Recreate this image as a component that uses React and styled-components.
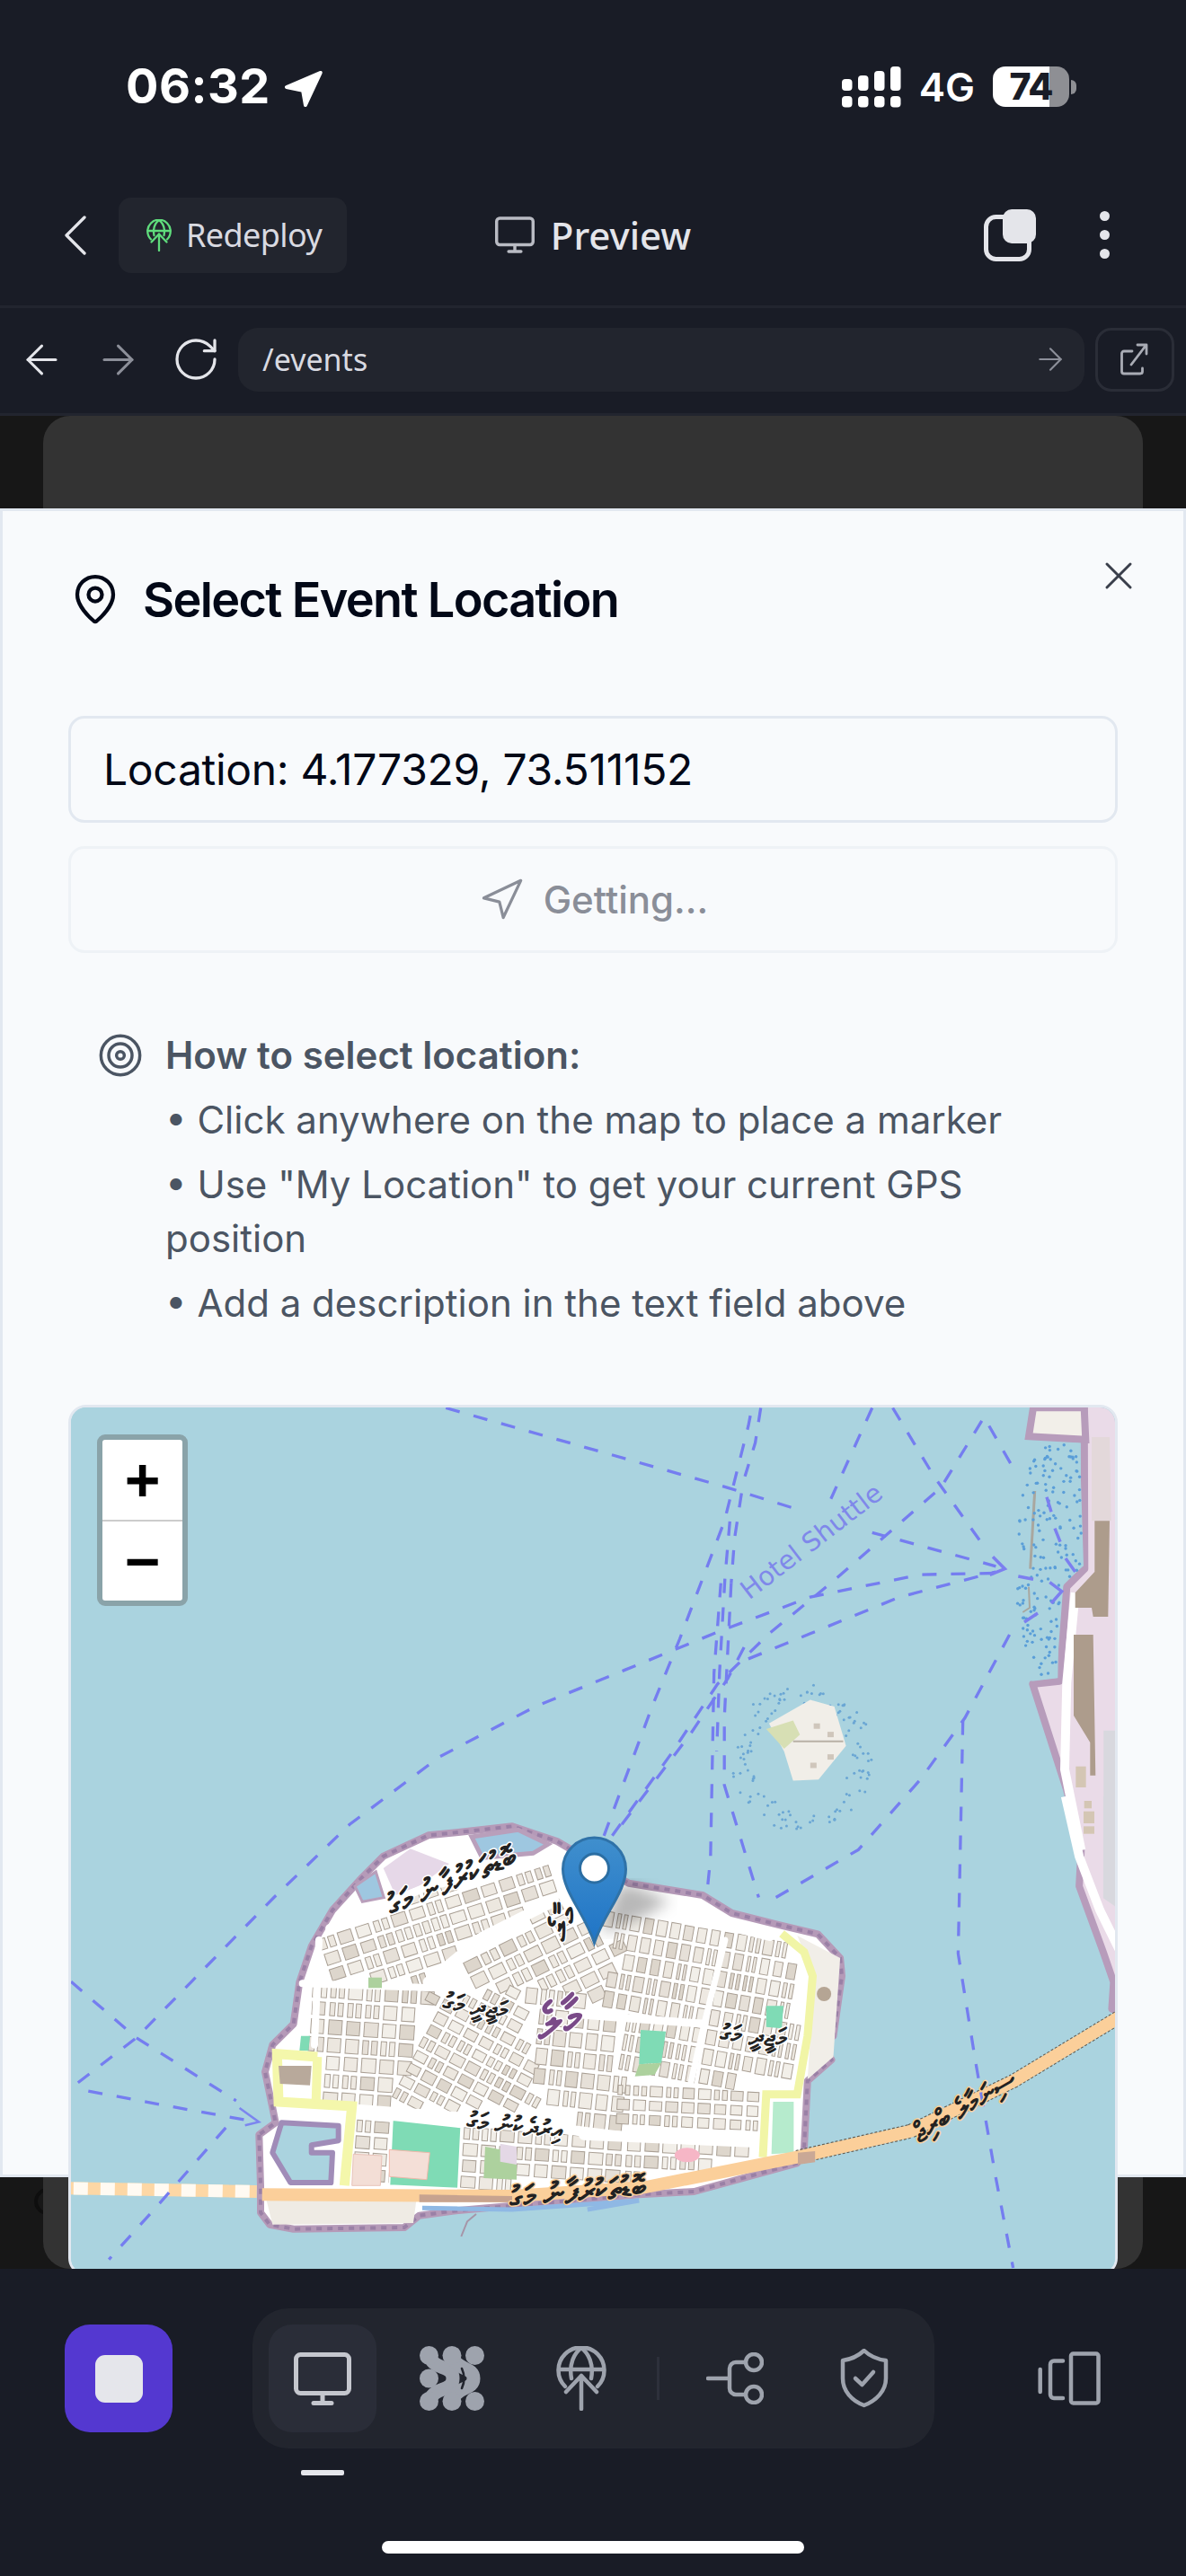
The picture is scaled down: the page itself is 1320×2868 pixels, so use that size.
import React from 'react';
import styled, { createGlobalStyle } from 'styled-components';
import { ChevronLeft, ArrowLeft, ArrowRight, RotateCw, MapPin, X, Navigation, Target } from 'lucide-react';

const GlobalStyle = createGlobalStyle`
    html, body {
        margin:0;
        padding:0;
        background:#191c26;
    }
    * {
        box-sizing:border-box;
    }
`

const Screen = styled.div`
    width:1320px;
    height:2868px;
    display:flex;
    flex-direction:column;
    overflow:hidden;
    background:#191c26;
    font-family:Inter, "Liberation Sans", sans-serif;
`

/* status bar */
const StatusBar = styled.div`
    height:200px;
    flex:none;
    display:flex;
    justify-content:space-between;
    padding:74px 130px 0 140px;
    color:#fff;
`

const Clock = styled.div`
    display:flex;
    align-items:flex-start;
    gap:14px;
    font-size:54px;
    font-weight:700;
    line-height:44px;
    letter-spacing:0.5px;
    svg { margin-top:3px; }
`

const Cell = styled.div`
    display:flex;
    align-items:flex-start;
    gap:20px;
`

const Network = styled.div`
    font-size:44px;
    font-weight:600;
    line-height:46px;
`

const Battery = styled.div`
    position:relative;
    width:85px;
    height:45px;
    border-radius:14px;
    background:linear-gradient(to right, #fff 74%, #8e8f94 74%);
    color:#191c26;
    font-size:41px;
    font-weight:800;
    line-height:45px;
    letter-spacing:-1px;
    text-align:center;

    &:after {
        content:"";
        position:absolute;
        top:15px;
        right:-8px;
        width:6px;
        height:16px;
        border-radius:0 6px 6px 0;
        background:#8e8f94;
    }
`

/* nav bar */
const NavBar = styled.div`
    height:143px;
    flex:none;
    display:grid;
    grid-template-columns:1fr auto 1fr;
    align-items:center;
    padding-bottom:17px;
    border-bottom:3px solid #22252f;
`

const NavLeft = styled.div`
    display:flex;
    align-items:center;
    gap:8px;
    padding-left:44px;
    color:#e4e5ea;
`

const Chip = styled.div`
    width:254px;
    height:84px;
    border-radius:14px;
    background:#22252e;
    display:flex;
    align-items:center;
    gap:16px;
    padding-left:31px;
    color:#d9dae1;
    font-family:"Noto Sans", Inter, sans-serif;
    font-size:36px;
    letter-spacing:-0.6px;
`

const Title = styled.div`
    display:flex;
    align-items:center;
    gap:18px;
    color:#e4e5ea;
    font-family:"Noto Sans", Inter, sans-serif;
    font-size:42px;
    font-weight:500;
`

const TitleIcon = styled.span`
    display:flex;
    color:#b9bbc3;
`

const NavRight = styled.div`
    display:flex;
    align-items:center;
    justify-content:flex-end;
    gap:71px;
    padding-right:85px;
`

const Dots = styled.div`
    display:flex;
    flex-direction:column;
    gap:10px;

    i {
        width:11px;
        height:11px;
        border-radius:50%;
        background:#e4e5ea;
    }
`

/* url bar */
const UrlBar = styled.div`
    height:120px;
    flex:none;
    display:flex;
    align-items:center;
    padding:0 13px 3px 20px;
    border-bottom:3px solid #22252f;
`

const BrowserIcon = styled.span`
    display:flex;
    margin-right:${p => p.$gap}px;
    color:${p => p.$dim ? '#8c8f99' : '#e4e5ea'};
`

const UrlField = styled.div`
    flex:1;
    height:71px;
    border-radius:22px;
    background:#22252e;
    display:flex;
    align-items:center;
    justify-content:space-between;
    padding:0 18px 0 27px;
    color:#d9dae1;
    font-family:"Noto Sans", Inter, sans-serif;
    font-size:34px;
`

const OpenButton = styled.div`
    width:88px;
    height:71px;
    margin-left:12px;
    border:3px solid #2a2d37;
    border-radius:18px;
    display:flex;
    align-items:center;
    justify-content:center;
`

/* page behind the dialog */
const Stage = styled.div`
    position:relative;
    flex:1;
    min-height:0;
    overflow:hidden;
    background:#171717;
    padding:0 48px;
    display:flex;
`

const BackCard = styled.div`
    position:relative;
    flex:1;
    border-radius:30px;
    background:#333333;
`

const GhostRing = styled.div`
    position:absolute;
    left:38px;
    bottom:60px;
    width:30px;
    height:30px;
    border:4px solid #0e0e0e;
    border-radius:50%;
`

const Dialog = styled.div`
    position:absolute;
    top:103px;
    left:0;
    right:0;
    height:1858px;
    padding:66px 73px 0;
    background:#f8fafc;
    border:3px solid #e2e8f0;
    color:#020817;
`

const CloseButton = styled.div`
    position:absolute;
    top:46px;
    right:46px;
    display:flex;
    color:#3a3f4b;
`

const DialogHeading = styled.div`
    display:flex;
    align-items:center;
    gap:23px;
    height:64px;
    font-size:54px;
    font-weight:600;
    letter-spacing:-1.65px;
    margin-bottom:98px;
`

const LocationInput = styled.div`
    height:119px;
    border:3px solid #e2e8f0;
    border-radius:18px;
    padding:0 36px;
    display:flex;
    align-items:center;
    font-size:48px;
    letter-spacing:-0.3px;
    margin-bottom:26px;
`

const GpsButton = styled.button`
    width:100%;
    height:119px;
    border:3px solid #eef2f6;
    border-radius:18px;
    background:transparent;
    display:flex;
    align-items:center;
    justify-content:center;
    gap:21px;
    color:#8a8e98;
    font-family:inherit;
    font-size:42px;
    font-weight:500;
    margin-bottom:84px;
`

const Hint = styled.div`
    padding:0 37px;
    color:#4b5563;
    font-size:42px;
    line-height:60px;
    margin-bottom:83px;
`

const HintTitle = styled.div`
    display:flex;
    align-items:center;
    gap:24px;
    font-weight:600;
    margin-left:-5px;
`

const HintList = styled.ul`
    list-style:none;
    margin:0;
    padding:0 0 0 71px;

    li { margin-top:12px; }
`

const MapFrame = styled.div`
    position:relative;
    height:970px;
    border:3px solid #e2e8f0;
    border-radius:20px;
    overflow:hidden;
    background:#aad3df;

    svg { display:block; }
`

const ZoomControl = styled.div`
    position:absolute;
    top:30px;
    left:29px;
    width:101px;
    height:191px;
    border:6px solid #8aa3a9;
    border-radius:9px;
    background:#fff;
    display:flex;
    flex-direction:column;
`

const ZoomButton = styled.div`
    flex:1;
    display:flex;
    align-items:center;
    justify-content:center;
    color:#000;
    font-family:"Liberation Sans", sans-serif;
    font-size:68px;
    font-weight:700;
    line-height:1;
    & + & { border-top:2px solid #ccc; }
`

/* bottom bar */
const BottomBar = styled.div`
    height:342px;
    flex:none;
    display:flex;
    flex-direction:column;
    padding-top:44px;
`

const DockRow = styled.div`
    display:flex;
    align-items:center;
    padding-left:72px;
`

const StopButton = styled.div`
    width:120px;
    height:120px;
    border-radius:28px;
    background:#5438d0;
    display:flex;
    align-items:center;
    justify-content:center;
    margin-right:89px;

    i {
        width:53px;
        height:53px;
        border-radius:11px;
        background:#e5e6eb;
    }
`

const Dock = styled.div`
    height:156px;
    padding:18px;
    border-radius:40px;
    background:#22252e;
    display:flex;
    gap:24px;
`

const DockTab = styled.div`
    width:120px;
    height:120px;
    border-radius:26px;
    background:${p => p.$active ? '#2a2d38' : 'transparent'};
    color:${p => p.$active ? '#c5c7ce' : '#9ea3ad'};
    display:flex;
    align-items:center;
    justify-content:center;
`

const DockDivider = styled.div`
    width:3px;
    height:48px;
    margin-top:36px;
    background:#2d303b;
`

const DockSide = styled.div`
    margin-left:115px;
    display:flex;
    color:#9ea3ad;
`

const TabMark = styled.div`
    width:48px;
    height:6px;
    margin:24px 0 0 335px;
    border-radius:2px;
    background:#e5e6eb;
`

const HomeBar = styled.div`
    width:470px;
    height:14px;
    margin:73px auto 0;
    border-radius:7px;
    background:#fff;
`

/* drawn icons */
const MonitorIcon = ({ w = 64, h = 59, sw = 5 }) => (
    <svg width={w} height={h} viewBox="0 0 64 59" fill="none" stroke="currentColor" strokeWidth={sw} strokeLinecap="round" strokeLinejoin="round">
        <rect x="2.5" y="2.5" width="59" height="43" rx="5" />
        <path d="M32 46v10M22 56.500h20" />
    </svg>
)

const GlobeUp = ({ w = 56, h = 72, color = 'currentColor', sw = 4.500 }) => (
    <svg width={w} height={h} viewBox="0 0 56 72" fill="none" stroke={color} strokeWidth={sw} strokeLinecap="round" strokeLinejoin="round">
        <path d="M10 45A25.500 25.500 0 1 1 46 45" />
        <path d="M3 26h50" />
        <path d="M17 36C14 20 20 8 28 2c8 6 14 18 11 34" />
        <path d="M28 70V33M11 51l17-18 17 18" />
    </svg>
)

const NetworkIcon = () => (
    <svg width="72" height="72" viewBox="0 0 72 72" fill="#9ea3ad">
        <g fill="none" stroke="#9ea3ad" strokeWidth="15" strokeLinecap="round">
            <path d="M12 13C17 27 37 21 37 36S17 45 12 59" />
            <path d="M37 13C42 27 60 23 60 36S42 45 37 59" />
        </g>
        {[[10.5, 10.5], [36, 10.5], [61.5, 10.5], [10.5, 36], [10.5, 61.5], [36, 61.5], [61.5, 61.5]].map(([x, y]) => (
            <circle key={`${x}-${y}`} cx={x} cy={y} r="10.500" />
        ))}
        <path d="M47 25q5 11 0 22" fill="none" stroke="#22252e" strokeWidth="2.600" strokeLinecap="round" />
    </svg>
)

const BranchIcon = () => (
    <svg width="64" height="58" viewBox="26 49 64 58" fill="none" stroke="currentColor" strokeWidth="4.500" strokeLinecap="round">
        <path d="M28 78h24M69 60H59a7 7 0 0 0-7 7v22a7 7 0 0 0 7 7h10" />
        <circle cx="79" cy="60" r="9" />
        <circle cx="79" cy="96" r="9" />
    </svg>
)

const ShieldIcon = () => (
    <svg width="54" height="66" viewBox="175 45 54 66" fill="none" stroke="currentColor" strokeWidth="4.500" strokeLinecap="round" strokeLinejoin="round">
        <path d="M201.700 47C193 55 186 57 178 58v20c0 14 10 25 23.700 30 13.300-5 24.300-16 24.300-30V58c-8-1-16-3-24.300-11z" />
        <path d="M192 78l7.500 7 12.500-14" />
    </svg>
)

const RotateIcon = () => (
    <svg width="70" height="60" viewBox="394 48 70 60" fill="none" stroke="currentColor" strokeWidth="4.500" strokeLinecap="round" strokeLinejoin="round">
        <rect x="431" y="50.500" width="30.500" height="55" rx="2.500" />
        <path d="M422 58.500h-10a4 4 0 0 0-4 4V96a4 4 0 0 0 4 4h10M396.700 68v25" />
    </svg>
)

const CopyIcon = () => (
    <svg width="58" height="58" viewBox="1095 233 58 58">
        <rect x="1097.500" y="241.500" width="48" height="47" rx="11" fill="none" stroke="#e4e5ea" strokeWidth="5" />
        <rect x="1116" y="233" width="37" height="38" rx="10" fill="#e4e5ea" />
    </svg>
)

const OpenIcon = () => (
    <svg width="32" height="36" viewBox="0 0 32 36" fill="none" stroke="#a9acb5" strokeWidth="2.800" strokeLinecap="round" strokeLinejoin="round">
        <path d="M13 9H4a2.500 2.500 0 0 0-2.500 2.500v20A2.500 2.500 0 0 0 4 34h18a2.500 2.500 0 0 0 2.500-2.500V28" />
        <path d="M12 24L28 3M19 2h10v10" />
    </svg>
)

const SignalIcon = () => (
    <svg width="66" height="46" viewBox="0 0 66 46" fill="#fff">
        {[[0, 14], [18, 10], [36, 5], [54, 0]].map(([x, y]) => (
            <g key={x}>
                <rect x={x} y={y} width="11.500" height={27 - y} rx="4" />
                <rect x={x} y="33" width="11.500" height="12.500" rx="4" />
            </g>
        ))}
    </svg>
)

/* map drawing: points are read off the reference in page pixels */
const zoom3 = ([x, y]) => [60 + x / 1.3067, 1550 + y / 1.6];
const zoom8 = ([x, y]) => [270 + x / 3, 2000 + y / 3];
const zoom9 = ([x, y]) => [650 + x / 2.613, 2000 + y / 3];
const zoom10 = ([x, y]) => [1100 + x / 3, 1560 + y / 3];
const fmt = pts => pts.map(([x, y]) => `${x.toFixed(1)},${y.toFixed(1)}`).join(' ');
const on = (fn, list) => list.map(fn);

let seed = 7;
const rnd = () => {
    seed = (seed * 16807) % 2147483647;
    return seed / 2147483647;
};

const inside = (poly, x, y) => {
    let hit = false;
    for (let i = 0, j = poly.length - 1; i < poly.length; j = i++) {
        const [xi, yi] = poly[i];
        const [xj, yj] = poly[j];
        if ((yi > y) !== (yj > y) && x < ((xj - xi) * (y - yi)) / (yj - yi) + xi) hit = !hit;
    }
    return hit;
};

const coast = [
    ...on(zoom8, [[55, 1130], [60, 1300], [60, 1390], [90, 1430], [170, 1445], [540, 1440], [590, 1400], [700, 1385]]),
    ...on(zoom9, [[160, 1330], [320, 1320], [620, 1225], [640, 1180], [650, 950], [720, 880], [680, 800], [725, 800], [750, 600], [745, 540], [680, 460], [570, 430], [430, 390], [345, 330], [130, 290]]),
    ...on(zoom8, [[1050, 150], [900, 100], [720, 120], [620, 130], [470, 200], [400, 270], [300, 380], [230, 500], [190, 620], [170, 760], [100, 830], [75, 920], [100, 1040], [110, 1090]]),
];

const cityAreas = [
    { poly: on(zoom8, [[280, 470], [620, 310], [1040, 225], [1040, 340], [800, 460], [620, 620], [280, 620]]), angle: -18, w: 21, h: 18 },
    { poly: on(zoom8, [[680, 620], [1040, 350], [1260, 500], [1200, 700], [950, 640]]), angle: -26, w: 22, h: 18 },
    { poly: on(zoom8, [[210, 640], [640, 650], [500, 1040], [270, 1040], [240, 840]]), angle: 4, w: 20, h: 20 },
    { poly: on(zoom8, [[500, 690], [920, 640], [1000, 1040], [480, 1040]]), angle: 28, w: 19, h: 16 },
    { poly: on(zoom8, [[950, 650], [1260, 700], [1260, 1110], [1000, 1060]]), angle: 6, w: 18, h: 22 },
    { poly: on(zoom8, [[380, 1070], [780, 1090], [1260, 1150], [1260, 1300], [380, 1300]]), angle: 4, w: 20, h: 18 },
    { poly: on(zoom9, [[100, 350], [560, 480], [625, 600], [610, 970], [0, 910], [0, 520]]), angle: 10, w: 15, h: 22 },
    { poly: on(zoom9, [[0, 940], [510, 1000], [505, 1135], [0, 1100]]), angle: 3, w: 18, h: 16 },
    { poly: on(zoom9, [[0, 1150], [495, 1170], [495, 1205], [180, 1270], [0, 1300]]), angle: 3, w: 20, h: 18 },
];

const blockFills = ['#f0ece5', '#ece7df', '#e6e0d8', '#f2efe9', '#ddd6cc', '#eee9e2'];

const cityBlocks = cityAreas.flatMap(({ poly, angle, w, h }, areaIndex) => {
    const xs = poly.map(p => p[0]);
    const ys = poly.map(p => p[1]);
    const cx = (Math.min(...xs) + Math.max(...xs)) / 2;
    const cy = (Math.min(...ys) + Math.max(...ys)) / 2;
    const a = (angle * Math.PI) / 180;
    const out = [];
    for (let i = -16; i <= 16; i++) {
        for (let j = -16; j <= 16; j++) {
            const u = i * w;
            const v = j * h;
            const x = cx + u * Math.cos(a) - v * Math.sin(a);
            const y = cy + u * Math.sin(a) + v * Math.cos(a);
            if (!inside(poly, x, y)) continue;
            if (cityAreas.slice(0, areaIndex).some(area => inside(area.poly, x, y))) continue;
            const bw = w - 4 - rnd() * 2;
            const bh = h - 4 - rnd() * 2;
            const fill = blockFills[Math.floor(rnd() * blockFills.length)];
            if (rnd() < 0.3) {
                // a narrow pair of buildings instead of one block
                const dx = (bw / 4 + 1) * Math.cos(a);
                const dy = (bw / 4 + 1) * Math.sin(a);
                out.push({ x: x - dx, y: y - dy, angle, w: bw / 2 - 1.5, h: bh, fill });
                out.push({ x: x + dx, y: y + dy, angle, w: bw / 2 - 1.5, h: bh, fill });
            } else {
                out.push({ x, y, angle, w: bw, h: bh, fill });
            }
        }
    }
    return out;
});

const lagoon = on(zoom10, [[175, 135], [305, 140], [318, 550], [238, 620], [232, 925], [145, 935], [90, 640], [100, 420], [120, 260]]);
const lagoonDots = [];
while (lagoonDots.length < 170) {
    const x = 1125 + rnd() * 90;
    const y = 1600 + rnd() * 290;
    if (inside(lagoon, x, y)) lagoonDots.push([x, y]);
}

const reefDots = [];
while (reefDots.length < 130) {
    const t = rnd() * Math.PI * 2;
    const r = 0.72 + rnd() * 0.34;
    reefDots.push(zoom3([1088 + Math.cos(t) * 98 * r, 650 + Math.sin(t) * 125 * r]));
}

const ferryLines = [
    on(zoom3, [[570, 28], [980, 170], [1085, 210]]),
    on(zoom3, [[800, 790], [870, 560], [910, 440], [975, 230], [1010, 60], [1015, 28]]),
    on(zoom3, [[812, 790], [900, 640], [965, 520], [1040, 430], [1130, 340], [1290, 170], [1360, 30]]),
    on(zoom3, [[826, 770], [925, 610], [980, 510], [1010, 440]]),
    on(zoom3, [[970, 340], [960, 500], [955, 830], [950, 890]]),
    on(zoom3, [[983, 230], [976, 330], [968, 500], [964, 640]]),
    on(zoom3, [[985, 340], [975, 580], [975, 700], [1025, 900]]),
    on(zoom3, [[1000, 180], [990, 260], [985, 340]]),
    on(zoom3, [[1028, 28], [1020, 90], [1005, 150]]),
    on(zoom3, [[35, 1230], [120, 1150], [200, 1050], [320, 900], [430, 770], [560, 650], [700, 560], [830, 495], [970, 425], [1100, 365], [1260, 325], [1380, 322]]),
    on(zoom3, [[1010, 475], [1100, 430], [1230, 365], [1370, 320]]),
    on(zoom3, [[1050, 900], [1170, 815], [1260, 690], [1325, 580], [1395, 420]]),
    on(zoom3, [[1322, 585], [1315, 1000], [1340, 1190], [1370, 1400], [1395, 1560]]),
    on(zoom3, [[25, 1050], [120, 1150], [265, 1262]]),
    on(zoom3, [[50, 1245], [160, 1270], [295, 1300]]),
    on(zoom3, [[250, 1310], [150, 1450], [80, 1545]]),
    on(zoom3, [[1220, 28], [1280, 150], [1350, 270]]),
    on(zoom3, [[1190, 28], [1130, 190]]),
    on(zoom3, [[1190, 250], [1370, 310]]),
    on(zoom3, [[1360, 60], [1395, 135]]),
];

const whiteRoads = [
    [9, on(zoom8, [[290, 440], [620, 300], [1030, 212]])],
    [8, on(zoom8, [[255, 480], [240, 830]])],
    [8, on(zoom8, [[200, 625], [640, 640]])],
    [12, on(zoom8, [[620, 620], [800, 470], [1040, 350]])],
    [11, on(zoom8, [[380, 1045], [780, 1075], [1260, 1135]])],
    [12, on(zoom9, [[0, 1130], [500, 1155]])],
    [12, on(zoom9, [[100, 340], [540, 465]])],
    [9, on(zoom9, [[0, 730], [350, 760]])],
    [7, on(zoom9, [[410, 480], [350, 760], [310, 960]])],
];

const Label = ({ x, y, angle, size = 28, color = '#222', halo = '#fff', children }) => (
    <text
        x={x}
        y={y}
        transform={`rotate(${angle} ${x} ${y})`}
        textAnchor="middle"
        fontFamily="'Noto Sans', 'DejaVu Sans', sans-serif"
        fontSize={size}
        fontWeight="700"
        fill={color}
        stroke={halo}
        strokeWidth="3"
        paintOrder="stroke"
    >
        {children}
    </text>
);

const MapPicture = () => (
    <svg width="1162" height="964" viewBox="79 1567 1162 964">
        <defs>
            <filter id="soft"><feGaussianBlur stdDeviation="0.7" /></filter>
            <filter id="softer"><feGaussianBlur stdDeviation="0.4" /></filter>
            <filter id="shade"><feGaussianBlur stdDeviation="8" /></filter>
            <linearGradient id="pinFill" x1="0" y1="0" x2="0" y2="1">
                <stop offset="0" stopColor="#408fcd" />
                <stop offset="1" stopColor="#1f74c6" />
            </linearGradient>
        </defs>
        <rect x="79" y="1567" width="1162" height="964" fill="#aad3df" />

        <g filter="url(#soft)">
            {/* airport island */}
            <polygon
                points={fmt([...on(zoom10, [[320, 0], [322, 560], [262, 620], [238, 935], [148, 945], [262, 1300], [310, 1500]]), ...on(zoom9, [[1440, 300], [1510, 520], [1540, 620], [1535, 710], [1560, 720], [1560, 0]]), [1245, 1560]])}
                fill="#eadbe8"
                stroke="#b79cbb"
                strokeWidth="8"
                strokeLinejoin="round"
            />
            <polygon points={fmt(on(zoom10, [[150, 22], [320, 22], [325, 128], [135, 118]]))} fill="#f2efe9" stroke="#b79cbb" strokeWidth="8" />
            <polygon points={fmt(lagoon.slice(0, 6))} fill="#aad3df" />
            <polyline points={fmt(on(zoom10, [[290, 640], [262, 940], [255, 1230], [310, 1500]]))} fill="none" stroke="#fff" strokeWidth="10" />
            <polyline points={fmt(on(zoom9, [[1400, 0], [1440, 200], [1500, 380], [1560, 520]]))} fill="none" stroke="#fff" strokeWidth="10" />
            <polygon points={fmt(on(zoom10, [[345, 120], [405, 120], [410, 400], [345, 400]]))} fill="#e3d8da" />
            <polygon points={fmt(on(zoom10, [[355, 400], [405, 400], [400, 720], [350, 720], [345, 690], [290, 690], [290, 640], [355, 570]]))} fill="#ad9c8c" />
            <polygon points={fmt(on(zoom10, [[285, 780], [350, 780], [358, 1250], [340, 1250], [340, 1140], [285, 1050]]))} fill="#ad9c8c" />
            <polygon points={fmt(on(zoom10, [[385, 1100], [430, 1100], [430, 1500], [385, 1500]]))} fill="#d8d8de" />
            <polygon points={fmt(on(zoom9, [[1510, 0], [1560, 0], [1560, 380], [1510, 340]]))} fill="#d8d8de" />
            {[[292, 1220, 34, 70], [318, 1370, 36, 40], [318, 1420, 36, 25], [320, 1335, 25, 25]].map(([x, y, w, h]) => {
                const [px, py] = zoom10([x, y]);
                return <rect key={y} x={px} y={py} width={w / 3} height={h / 3} fill="#d4c6b4" />;
            })}
            <polyline points={fmt(on(zoom10, [[155, 300], [140, 560]]))} fill="none" stroke="#a9a79f" strokeWidth="3" />
            <polyline points={fmt(on(zoom10, [[135, 620], [138, 690], [115, 705]]))} fill="none" stroke="#a9a79f" strokeWidth="2" />
            {lagoonDots.map(([x, y], i) => <circle key={i} cx={x} cy={y} r="1.700" fill="#5a9ed8" />)}

            {/* small island */}
            {reefDots.map(([x, y], i) => <circle key={i} cx={x} cy={y} r="1.500" fill="#6aa6d4" />)}
            <polygon points={fmt(on(zoom3, [[1040, 590], [1100, 548], [1135, 560], [1152, 630], [1112, 690], [1075, 692], [1062, 640]]))} fill="#f1eee8" />
            <polygon points={fmt(on(zoom3, [[1036, 600], [1075, 585], [1085, 610], [1062, 635]]))} fill="#d7dfb4" />
            <polyline points={fmt(on(zoom3, [[1075, 622], [1148, 622]]))} stroke="#b8b0a6" strokeWidth="2" fill="none" />
            {[[1105, 590], [1125, 605], [1100, 660], [1125, 645]].map(([x, y]) => {
                const [px, py] = zoom3([x, y]);
                return <rect key={x + y} x={px} y={py} width="7" height="6" fill="#cfc6bb" />;
            })}

            {/* Male */}
            <polygon points={fmt(coast)} fill="#fff" stroke="#b59ab8" strokeWidth="8" strokeLinejoin="round" />
            <polygon points={fmt(coast)} fill="none" stroke="#9a80a6" strokeWidth="4" strokeDasharray="6 6" />
            <polygon points={fmt(on(zoom8, [[470, 240], [560, 175], [690, 225], [590, 300], [510, 330]]))} fill="#e6d8e8" />
            <polygon points={fmt(on(zoom8, [[765, 135], [920, 112], [1020, 160], [970, 190], [800, 205]]))} fill="#9ec7e0" stroke="#b99fbb" strokeWidth="5" />
            <polygon points={fmt(on(zoom8, [[375, 300], [445, 252], [472, 338], [400, 352]]))} fill="#9ec7e0" stroke="#b99fbb" strokeWidth="3" />
            <polygon points={fmt(on(zoom9, [[620, 465], [745, 540], [725, 870], [650, 945], [670, 600]]))} fill="#f1eee8" />
            <polygon points={fmt(on(zoom8, [[80, 1350], [580, 1350], [570, 1425], [100, 1430]]))} fill="#efebe4" />

            {cityBlocks.map((b, i) => (
                <rect
                    key={i}
                    x={b.x - b.w / 2}
                    y={b.y - b.h / 2}
                    width={b.w}
                    height={b.h}
                    fill={b.fill}
                    stroke="#a99f94"
                    strokeWidth="1"
                    transform={`rotate(${b.angle} ${b.x} ${b.y})`}
                />
            ))}
            {whiteRoads.map(([w, pts], i) => (
                <polyline key={i} points={fmt(pts)} fill="none" stroke="#fff" strokeWidth={w} strokeLinecap="round" />
            ))}

            {/* parks and pitches */}
            <polygon points={fmt(on(zoom8, [[500, 1080], [730, 1105], [720, 1310], [490, 1300]]))} fill="#7fdbb5" stroke="#fff" strokeWidth="2" />
            <polygon points={fmt(on(zoom8, [[490, 1180], [625, 1190], [615, 1280], [490, 1270]]))} fill="#f4dfd7" stroke="#f0b8aa" strokeWidth="1" />
            <polygon points={fmt(on(zoom8, [[370, 1195], [465, 1200], [460, 1300], [365, 1300]]))} fill="#f3ded6" stroke="#e8c3ba" strokeWidth="1" />
            <polygon points={fmt(on(zoom8, [[810, 1170], [915, 1190], [915, 1280], [805, 1275]]))} fill="#add19e" />
            <polygon points={fmt(on(zoom8, [[860, 1160], [915, 1170], [915, 1230], [860, 1220]]))} fill="#e4d8e6" />
            <polygon points={fmt(on(zoom8, [[420, 605], [465, 605], [465, 640], [420, 640]]))} fill="#add19e" />
            <polygon points={fmt(on(zoom8, [[195, 800], [225, 800], [220, 850], [190, 850]]))} fill="#7fdbb5" />
            <polygon points={fmt(on(zoom9, [[530, 700], [580, 700], [575, 775], [530, 770]]))} fill="#7fdbb5" />
            <polygon points={fmt(on(zoom9, [[165, 780], [238, 785], [225, 890], [160, 895]]))} fill="#7fdbb5" />
            <polygon points={fmt(on(zoom9, [[160, 895], [225, 890], [205, 930], [148, 935]]))} fill="#add19e" />
            <polygon points={fmt(on(zoom9, [[550, 1020], [610, 1020], [610, 1190], [545, 1195]]))} fill="#b6ebcd" />
            <ellipse cx={650 + 300 / 2.613} cy={2000 + 1198 / 3} rx="14" ry="8" fill="#f6b6c6" />
            <circle cx={650 + 698 / 2.613} cy={2000 + 660 / 3} r="8" fill="#b5a594" />

            {/* harbour */}
            <polygon points={fmt(on(zoom8, [[130, 1090], [320, 1100], [320, 1150], [230, 1165], [230, 1190], [300, 1190], [295, 1290], [160, 1290], [100, 1190]]))} fill="#aad3df" stroke="#a08cb8" strokeWidth="6" strokeLinejoin="round" />

            {/* secondary yellow roads */}
            <polyline points={fmt(on(zoom8, [[250, 870], [115, 860], [120, 1020], [365, 1035], [340, 1300]]))} fill="none" stroke="#f4f7ab" strokeWidth="11" />
            <polyline points={fmt(on(zoom8, [[250, 870], [245, 1020]]))} fill="none" stroke="#f4f7ab" strokeWidth="10" />
            <polygon points={fmt(on(zoom8, [[120, 900], [230, 900], [225, 965], [125, 960]]))} fill="#b8a99b" />
            <polyline points={fmt(on(zoom9, [[575, 458], [640, 520], [665, 600], [650, 800], [620, 995], [530, 995], [520, 1205]]))} fill="none" stroke="#f1f5a6" strokeWidth="9" />

            {/* Sinamale bridge and the ring road */}
            <polyline points={fmt(on(zoom9, [[620, 1205], [950, 1118], [1250, 950], [1560, 735]]))} fill="none" stroke="#5d5a52" strokeWidth="16" strokeDasharray="3 2" />
            <polyline points={fmt(on(zoom3, [[22, 1418], [295, 1424]]))} fill="none" stroke="#fdd7a5" strokeWidth="14" />
            <polyline points={fmt(on(zoom3, [[22, 1418], [295, 1424]]))} fill="none" stroke="#fffaf2" strokeWidth="14" strokeDasharray="16 14" strokeDashoffset="-5" />
            <polyline points={fmt([...on(zoom8, [[65, 1330], [900, 1335]]), ...on(zoom9, [[180, 1305], [620, 1205], [950, 1118], [1250, 950], [1560, 735]])])} fill="none" stroke="#fbcf9a" strokeWidth="14" strokeLinejoin="round" />
            <polygon points={fmt(on(zoom9, [[622, 1190], [672, 1185], [672, 1222], [622, 1230]]))} fill="#c9a896" />
            <polygon points={fmt(on(zoom8, [[590, 1330], [900, 1335], [900, 1355], [590, 1355]]))} fill="#c7a38f" />
            <polyline points={fmt([...on(zoom8, [[600, 1375], [900, 1380]]), ...on(zoom9, [[160, 1350], [10, 1380]])])} fill="none" stroke="#8fb8e4" strokeWidth="5" />
            <polyline points={fmt(on(zoom8, [[780, 1395], [750, 1420], [730, 1470]]))} fill="none" stroke="#a695a8" strokeWidth="2" />
        </g>

        <g filter="url(#softer)" fill="none" stroke="#747df0" strokeWidth="3.300" strokeDasharray="16 16">
            {ferryLines.map((pts, i) => <polyline key={i} points={fmt(pts)} />)}
        </g>
        <polyline points={fmt(on(zoom3, [[270, 1275], [298, 1300], [278, 1306]]))} fill="none" stroke="#7c85ef" strokeWidth="2.500" />
        <g filter="url(#softer)" fill="none" stroke="#7c7ff0" strokeWidth="3.500">
            <polyline points={fmt(on(zoom10, [[195, 320], [210, 370]]))} />
            <polyline points={fmt(on(zoom10, [[222, 425], [240, 470]]))} />
            <polyline points={fmt(on(zoom10, [[258, 525], [290, 570]]))} />
            <polyline points={fmt(on(zoom10, [[205, 605], [245, 635], [210, 675]]))} />
            <polyline points={fmt(on(zoom10, [[100, 585], [150, 595]]))} />
            <polyline points={fmt(on(zoom10, [[15, 520], [55, 560], [5, 580]]))} />
            <polyline points={fmt(on(zoom10, [[120, 738], [165, 708]]))} />
        </g>

        <text
            x={909}
            y={1724}
            transform="rotate(-37.500 909 1724)"
            textAnchor="middle"
            fontFamily="'DejaVu Sans', sans-serif"
            fontSize="29"
            fill="#7f88ea"
        >
            Hotel Shuttle
        </text>

        <Label x={507} y={2105} angle={-22} size={34}>ބޮޑުތަކުރުފާނު މަގު</Label>
        <Label x={528} y={2243} angle={8}>މަޖީދީ މަގު</Label>
        <Label x={838} y={2276} angle={4}>މަޖީދީ މަގު</Label>
        <Label x={572} y={2376} angle={6}>އިރުދެކުނު މަގު</Label>
        <Label x={625} y={2266} angle={-12} size={52} color="#7a4a88">މާލެ</Label>
        <Label x={636} y={2146} angle={-60} size={36}>މާލެ</Label>
        <Label x={644} y={2452} angle={-5} size={34} halo="#fbcf9a">ބޮޑުތަކުރުފާނު މަގު</Label>
        <Label x={1078} y={2354} angle={-30} size={30} halo="#fbcf9a">ސިނަމާލެ ބްރިޖް</Label>

        {/* marker */}
        <polygon points={fmt(on(zoom9, [[95, 310], [130, 290], [250, 350], [160, 410], [50, 460]]))} fill="rgba(0,0,0,0.28)" filter="url(#shade)" />
        <path
            d="M661.500 2163C651 2131 626.500 2106 626.500 2081a35 35 0 0 1 70 0C696.500 2106 672 2131 661.500 2163z"
            fill="url(#pinFill)"
            stroke="#2f72a8"
            strokeWidth="3"
        />
        <circle cx="661.500" cy="2080" r="16" fill="#fff" stroke="#2b6ea3" strokeWidth="3" />
    </svg>
);

const App = () => (
    <Screen>
        <GlobalStyle />
        <StatusBar>
            <Clock>
                06:32
                <svg width="46" height="44" viewBox="311 76 48 46">
                    <path d="M354.700 80L315 97l19 4 3 17z" fill="#fff" stroke="#fff" strokeWidth="4" strokeLinejoin="round" />
                </svg>
            </Clock>
            <Cell>
                <SignalIcon />
                <Network>4G</Network>
                <Battery>74</Battery>
            </Cell>
        </StatusBar>

        <NavBar>
            <NavLeft>
                <ChevronLeft size={80} strokeWidth={1} />
                <Chip>
                    <GlobeUp w={28} h={36} color="#5fdc7c" sw={4.600} />
                    Redeploy
                </Chip>
            </NavLeft>
            <Title>
                <TitleIcon><MonitorIcon w={44} h={41} sw={5} /></TitleIcon>
                Preview
            </Title>
            <NavRight>
                <CopyIcon />
                <Dots><i /><i /><i /></Dots>
            </NavRight>
        </NavBar>

        <UrlBar>
            <BrowserIcon $gap={32}><ArrowLeft size={53} strokeWidth={1.400} /></BrowserIcon>
            <BrowserIcon $gap={32} $dim><ArrowRight size={53} strokeWidth={1.400} /></BrowserIcon>
            <BrowserIcon $gap={19}><RotateCw size={56} strokeWidth={1.400} /></BrowserIcon>
            <UrlField>
                /events
                <BrowserIcon $gap={0} $dim><ArrowRight size={40} strokeWidth={1.300} /></BrowserIcon>
            </UrlField>
            <OpenButton><OpenIcon /></OpenButton>
        </UrlBar>

        <Stage>
            <GhostRing />
            <BackCard />
            <Dialog>
                <CloseButton><X size={52} strokeWidth={1.400} /></CloseButton>
                <DialogHeading>
                    <MapPin size={60} strokeWidth={1.700} />
                    Select Event Location
                </DialogHeading>
                <LocationInput>Location: 4.177329, 73.511152</LocationInput>
                <GpsButton>
                    <Navigation size={52} strokeWidth={1.500} />
                    Getting...
                </GpsButton>
                <Hint>
                    <HintTitle>
                        <Target size={52} strokeWidth={1.600} />
                        How to select location:
                    </HintTitle>
                    <HintList>
                        <li>• Click anywhere on the map to place a marker</li>
                        <li>• Use "My Location" to get your current GPS position</li>
                        <li>• Add a description in the text field above</li>
                    </HintList>
                </Hint>
                <MapFrame>
                    <MapPicture />
                    <ZoomControl>
                        <ZoomButton>+</ZoomButton>
                        <ZoomButton>−</ZoomButton>
                    </ZoomControl>
                </MapFrame>
            </Dialog>
        </Stage>

        <BottomBar>
            <DockRow>
                <StopButton><i /></StopButton>
                <Dock>
                    <DockTab $active><MonitorIcon /></DockTab>
                    <DockTab><NetworkIcon /></DockTab>
                    <DockTab><GlobeUp /></DockTab>
                    <DockDivider />
                    <DockTab><BranchIcon /></DockTab>
                    <DockTab><ShieldIcon /></DockTab>
                </Dock>
                <DockSide><RotateIcon /></DockSide>
            </DockRow>
            <TabMark />
            <HomeBar />
        </BottomBar>
    </Screen>
);

export default App;
